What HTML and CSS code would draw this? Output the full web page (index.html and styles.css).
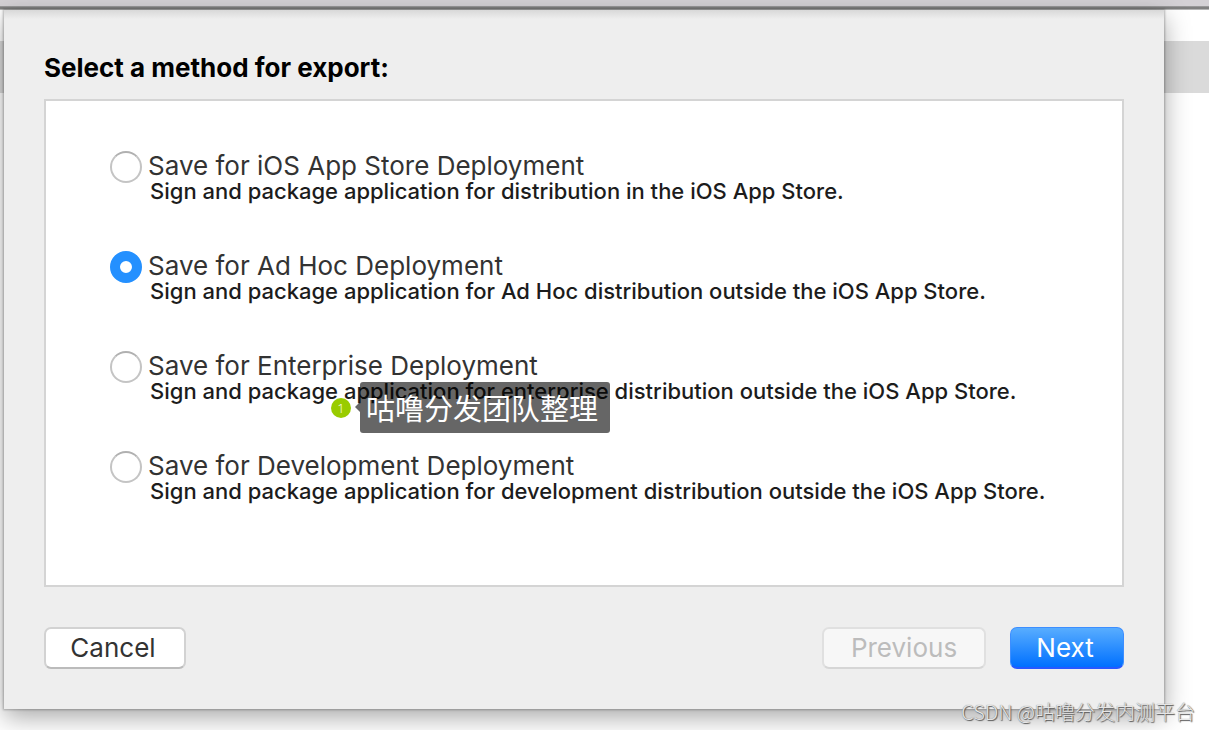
FILE: index.html
```html
<!DOCTYPE html>
<html lang="en">
<head>
<meta charset="utf-8">
<title>Export</title>
<link rel="stylesheet" href="styles.css">
</head>
<body>
<div class="toolbar"></div>
<main class="window">
  <form class="sheet">
    <h1 class="title" id="title">Select a method for export:</h1>
    <div class="options" role="radiogroup" aria-labelledby="title">
      <label class="option">
        <input class="radio" type="radio" name="method">
        <span class="text"><span class="name">Save for iOS App Store Deployment</span><span class="hint">Sign and package application for distribution in the iOS App Store.</span></span>
      </label>
      <label class="option">
        <input class="radio" type="radio" name="method" checked>
        <span class="text"><span class="name">Save for Ad Hoc Deployment</span><span class="hint">Sign and package application for Ad Hoc distribution outside the iOS App Store.</span></span>
      </label>
      <label class="option">
        <input class="radio" type="radio" name="method">
        <span class="text"><span class="name">Save for Enterprise Deployment</span><span class="hint">Sign and package application for enterprise distribution outside the iOS App Store.</span></span>
      </label>
      <label class="option">
        <input class="radio" type="radio" name="method">
        <span class="text"><span class="name">Save for Development Deployment</span><span class="hint">Sign and package application for development distribution outside the iOS App Store.</span></span>
      </label>
      <div class="note" lang="zh-CN"><span class="pin">1</span><span class="bubble">咕噜分发团队整理</span></div>
    </div>
    <div class="actions">
      <button class="button cancel" type="button">Cancel</button>
      <button class="button previous" type="button" disabled>Previous</button>
      <button class="button next" type="button">Next</button>
    </div>
  </form>
</main>
<div class="watermark" lang="zh-CN">CSDN @咕噜分发内测平台</div>
</body>
</html>
```
FILE: styles.css
```css
* { box-sizing: border-box; }

body {
  margin: 0;
  min-height: 100vh;
  position: relative;
  overflow: hidden;
  background: #fff;
  font-family: Inter, "Liberation Sans", "Noto Sans CJK SC", sans-serif;
  color: #333;
}

.toolbar {
  height: 10px;
  background: linear-gradient(#d4d1d5 6px, #b0afb1 6px, #808080 7px, #808080 9px, #b5b5b5 9px);
}

.window {
  padding: 0 45px 21px 4px;
  background: linear-gradient(#fff 31px, #dadada 31px, #dadada 83px, #fff 83px);
}

.sheet {
  padding: 42px 40px 40px;
  background: linear-gradient(#d8d8d8, #eee 9px);
  box-shadow: 0 0 2px 1px rgba(0, 0, 0, 0.25), 0 8px 24px rgba(0, 0, 0, 0.35);
}

.title {
  margin: 0 0 15px;
  font-size: 26px;
  line-height: 32px;
  font-weight: 700;
  color: #000;
}

.options {
  position: relative;
  display: flex;
  flex-direction: column;
  gap: 50px;
  padding: 51px 64px 83px;
  border: 2px solid #d4d4d4;
  background: #fff;
}

.option {
  display: flex;
  gap: 6px;
}

.radio {
  appearance: none;
  flex: none;
  width: 32px;
  height: 32px;
  margin: -1px 0 0;
  border: 2px solid #c4c4c4;
  border-top-color: #b0b0b0;
  border-radius: 50%;
  background: #fff;
}

.radio:checked {
  border: 10px solid #2490ff;
}

.text {
  display: flex;
  flex-direction: column;
}

.name {
  font-size: 26px;
  line-height: 28px;
}

.hint {
  padding-left: 2px;
  font-size: 22px;
  line-height: 22px;
  font-weight: 500;
  color: #1c1c1c;
}

.note {
  position: absolute;
  left: 285px;
  top: 281px;
  display: flex;
  align-items: center;
  gap: 9px;
  color: #fff;
  font-family: "Noto Sans CJK SC", sans-serif;
}

.pin {
  width: 20px;
  height: 20px;
  border-radius: 50%;
  background: #9c0;
  font-family: "Open Sans", sans-serif;
  font-size: 13px;
  font-weight: 300;
  line-height: 20px;
  text-align: center;
}

.bubble {
  position: relative;
  padding: 0 12px 0 6px;
  border-radius: 3px;
  background: rgba(0, 0, 0, 0.6);
  font-size: 29px;
  line-height: 51px;
}

.bubble::before {
  content: "";
  position: absolute;
  right: 100%;
  top: 20px;
  border: 5px solid transparent;
  border-left-width: 0;
  border-right-color: rgba(0, 0, 0, 0.6);
}

.actions {
  display: flex;
  margin-top: 40px;
}

.button {
  height: 42px;
  border: 2px solid #d2d2d2;
  border-bottom-color: #bbb;
  border-radius: 7px;
  background: #fff;
  font-family: inherit;
  font-size: 26px;
  line-height: 32px;
  color: #333;
}

.cancel { width: 142px; padding: 0 4px 0 0; }

.previous {
  width: 164px;
  padding: 0;
  margin-left: auto;
  border-color: #e0e0e0;
  border-bottom-color: #d6d6d6;
  background: #f7f7f7;
  color: #bcbcbc;
}

.next {
  width: 114px;
  padding: 0 4px 0 0;
  margin-left: 24px;
  border: 1px solid #3d8eff;
  border-bottom: 2px solid #2858ff;
  background: linear-gradient(#58adff, #0070ff);
  color: #fff;
}

.watermark {
  position: absolute;
  right: 14px;
  bottom: 4px;
  font-family: "Noto Sans CJK SC", sans-serif;
  font-size: 20px;
  line-height: 28px;
  font-weight: 300;
  color: #e6e6e6;
  text-shadow: 1px 1px 1px #555, 0 0 1px #777;
}
```
